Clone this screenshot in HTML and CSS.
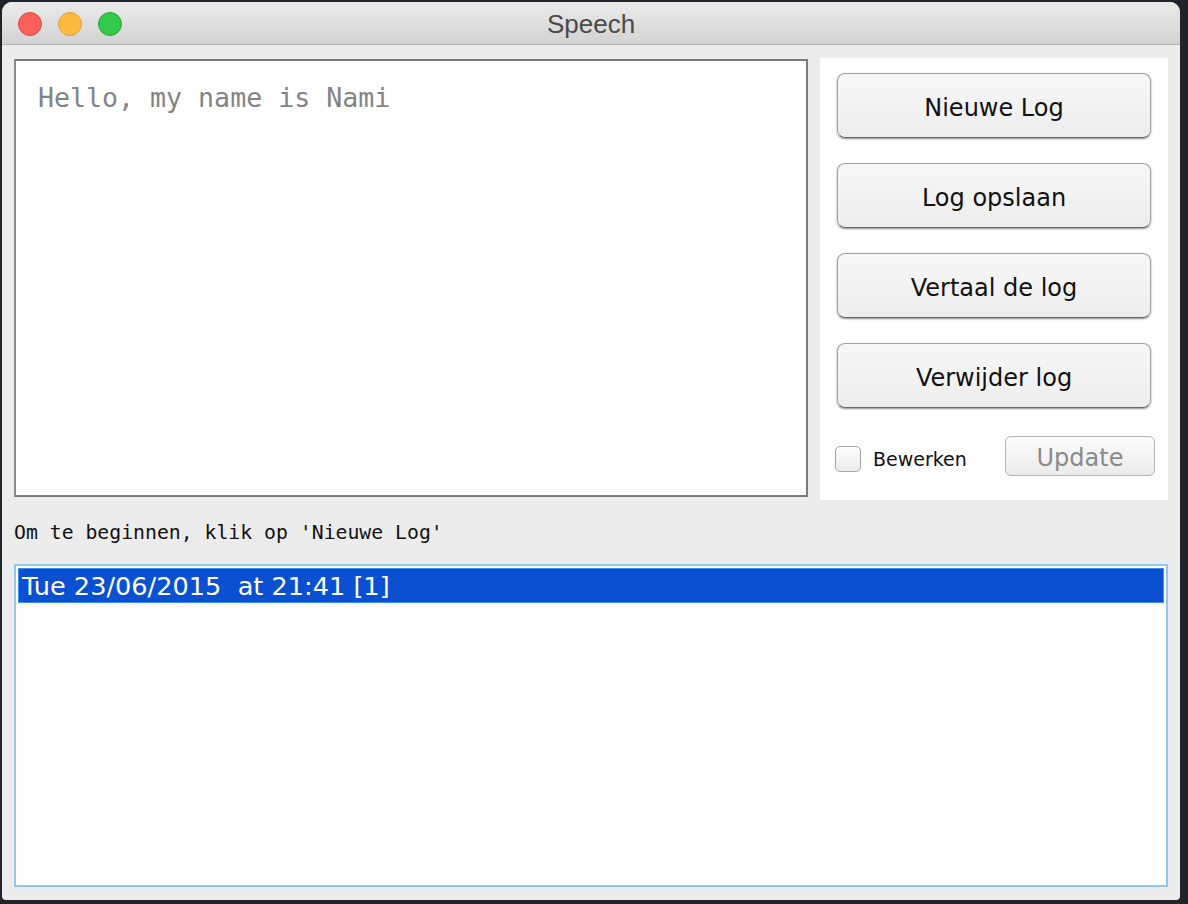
FILE: index.html
```html
<!DOCTYPE html>
<html>
<head>
<meta charset="utf-8">
<title>Speech</title>
<link rel="stylesheet" href="styles.css">
</head>
<body>
<div class="window">
  <div class="titlebar">
    <div class="lights">
      <span class="light red"></span>
      <span class="light yellow"></span>
      <span class="light green"></span>
    </div>
    <div class="title">Speech</div>
  </div>
  <div class="content">
    <div class="top-row">
      <div class="textarea">Hello, my name is Nami</div>
      <div class="panel">
        <button class="btn">Nieuwe Log</button>
        <button class="btn">Log opslaan</button>
        <button class="btn">Vertaal de log</button>
        <button class="btn">Verwijder log</button>
        <div class="edit-row">
          <label class="check"><span class="box"></span><span class="check-label">Bewerken</span></label>
          <button class="update">Update</button>
        </div>
      </div>
    </div>
    <div class="hint">Om te beginnen, klik op 'Nieuwe Log'</div>
    <div class="list">
      <div class="row selected">Tue 23/06/2015  at 21:41 [1]</div>
    </div>
  </div>
</div>
</body>
</html>
```
FILE: styles.css
```css
html, body {
  margin: 0;
  padding: 0;
  background: #202329;
  width: 1188px;
  height: 904px;
  overflow: hidden;
}

.window {
  margin: 2px 0 0 2px;
  width: 1178px;
  height: 898px;
  background: #ececec;
  border-radius: 10px 10px 4px 4px;
  overflow: hidden;
  display: flex;
  flex-direction: column;
}

.titlebar {
  position: relative;
  height: 42px;
  flex: none;
  background: linear-gradient(#ebebeb, #d2d2d2);
  border-bottom: 1px solid #b1b1b1;
  display: flex;
  align-items: center;
  justify-content: center;
}

.lights {
  position: absolute;
  left: 16px;
  top: 10px;
  display: flex;
  gap: 16px;
}

.light {
  width: 22px;
  height: 22px;
  border-radius: 50%;
  display: block;
}
.red { background: #fc605b; border: 1px solid #de4a44; }
.yellow { background: #fdbc40; border: 1px solid #dea236; }
.green { background: #34c84a; border: 1px solid #2aa83b; }

.title {
  font-family: "Liberation Sans", Arial, sans-serif;
  font-size: 26px;
  color: #4a4a4a;
  margin-top: 2px;
}

.content {
  flex: 1;
  display: flex;
  flex-direction: column;
  padding: 13px 12px 13px 12px;
}

.top-row {
  display: flex;
  gap: 12px;
  height: 442px;
  flex: none;
}

.textarea {
  width: 790px;
  height: 434px;
  margin-top: 1px;
  background: #fff;
  border: 2px solid #7b7b7b;
  border-left-color: #8a8a8a;
  font-family: "DejaVu Sans Mono", monospace;
  font-size: 26.6px;
  color: #838383;
  padding: 0;
  box-sizing: content-box;
  text-indent: 22px;
  line-height: 74px;
}

.panel {
  width: 348px;
  background: #fff;
  box-sizing: border-box;
  padding: 15px 17px 0 17px;
  display: flex;
  flex-direction: column;
  gap: 25px;
}

.btn {
  height: 65px;
  width: 314px;
  border: 1px solid #a2a2a2;
  border-bottom-color: #666;
  border-radius: 8px;
  background: linear-gradient(#f7f7f7, #ededed);
  box-shadow: 0 1px 2px rgba(0,0,0,0.45);
  font-family: "DejaVu Sans", sans-serif;
  font-size: 24px;
  color: #111;
  padding: 4px 0 0 0;
}

.edit-row {
  display: flex;
  align-items: center;
  justify-content: space-between;
  margin-top: 3px;
  width: 320px;
  margin-left: -2px;
}

.check {
  display: flex;
  align-items: center;
  gap: 12px;
  margin-top: 6px;
}

.box {
  border: 1px solid #a5a5a5;
  border-radius: 5px;
  background: linear-gradient(#fdfdfd, #ececec);
  box-sizing: border-box;
  display: block;
  width: 26px;
  height: 26px;
}

.check-label {
  font-family: "DejaVu Sans", sans-serif;
  font-size: 19px;
  color: #111;
}

.update {
  width: 150px;
  height: 40px;
  border: 1px solid #b3b3b3;
  border-radius: 6px;
  background: linear-gradient(#fbfbfb, #ececec);
  font-family: "DejaVu Sans", sans-serif;
  font-size: 24px;
  color: #8a8a8a;
  padding: 3px 0 0 0;
}

.hint {
  height: 64px;
  display: flex;
  align-items: center;
  font-family: "DejaVu Sans Mono", monospace;
  font-size: 19.8px;
  color: #111;
  flex: none;
  padding-top: 1px;
  box-sizing: border-box;
}

.list {
  flex: 1;
  background: #fff;
  border: 2px solid #93c5ef;
  padding: 2px;
}

.row.selected {
  height: 35px;
  box-sizing: border-box;
  background: #0a50d1;
  border: 1px solid #3a8cf7;
  color: #fff;
  font-family: "DejaVu Sans", sans-serif;
  font-size: 25.6px;
  white-space: pre;
  padding-left: 3px;
  padding-top: 2px;
  line-height: 31px;
}
```
